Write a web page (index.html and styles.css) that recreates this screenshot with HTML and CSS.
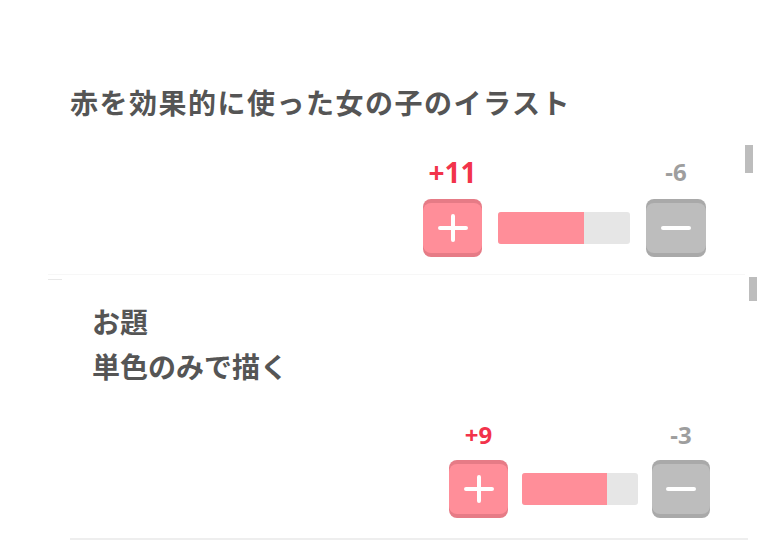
FILE: index.html
```html
<!DOCTYPE html>
<html lang="ja">
<head>
    <meta charset="UTF-8">
    <meta name="viewport" content="width=device-width, initial-scale=1.0">
    <title>お題</title>
    <link rel="stylesheet" href="styles.css">
</head>
<body>
    <div class="card first">
        <span class="thumb"></span>
        <h2 class="title">赤を効果的に使った女の子のイラスト</h2>
        <div class="vote">
            <span class="count plus big">+11</span>
            <span class="count minus">-6</span>
            <button class="btn btn-plus">
                <span class="face">
                    <svg width="30" height="28" viewBox="0 0 30 28"><path d="M15 2v24M2 14h26" stroke="#fff" stroke-width="4" stroke-linecap="round" fill="none"/></svg>
                </span>
            </button>
            <div class="bar"><div class="fill" style="width: 65%"></div></div>
            <button class="btn btn-minus">
                <span class="face">
                    <svg width="30" height="28" viewBox="0 0 30 28"><path d="M2 14h26" stroke="#fff" stroke-width="4" stroke-linecap="round" fill="none"/></svg>
                </span>
            </button>
        </div>
    </div>

    <div class="card second">
        <span class="thumb"></span>
        <div class="inner">
            <p class="theme">お題<br>単色のみで描く</p>
            <div class="vote small">
                <span class="count plus">+9</span>
                <span class="count minus">-3</span>
                <button class="btn btn-plus">
                    <span class="face">
                        <svg width="30" height="28" viewBox="0 0 30 28"><path d="M15 2v24M2 14h26" stroke="#fff" stroke-width="4" stroke-linecap="round" fill="none"/></svg>
                    </span>
                </button>
                <div class="bar"><div class="fill" style="width: 73%"></div></div>
                <button class="btn btn-minus">
                    <span class="face">
                        <svg width="30" height="28" viewBox="0 0 30 28"><path d="M2 14h26" stroke="#fff" stroke-width="4" stroke-linecap="round" fill="none"/></svg>
                    </span>
                </button>
            </div>
        </div>
    </div>
</body>
</html>
```

FILE: styles.css
```css
body {
    margin: 0;
    background: #fff;
    font-family: "Noto Sans CJK JP", "Noto Sans", sans-serif;
    color: #555;
}
.card {
    position: relative;
    margin-left: 48px;
}
.card.first {
    width: 697px;
    padding-top: 82px;
    padding-bottom: 17px;
    border-bottom: 1px solid #f7f7f7;
}
.card.second {
    width: 709px;
    padding-top: 24px;
}
.card.second::before {
    content: "";
    position: absolute;
    left: 0;
    top: 4px;
    width: 14px;
    height: 1px;
    background: #e8e8e8;
}
.thumb {
    position: absolute;
    width: 8px;
    background: #bdbdbd;
}
.first .thumb {
    right: -8px;
    top: 145px;
    height: 28px;
}
.second .thumb {
    right: 0;
    top: 2px;
    height: 24px;
}
.title {
    margin: 0 0 35px 22px;
    font-size: 28px;
    line-height: 40px;
    font-weight: bold;
    letter-spacing: 1.5px;
}
.inner {
    margin: 0 9px 0 22px;
    padding-bottom: 20px;
    border-bottom: 2px solid #eee;
}
.theme {
    margin: 0 0 33px 22px;
    font-size: 28px;
    line-height: 45px;
    font-weight: bold;
}
.vote {
    display: grid;
    grid-template-columns: 59px 132px 60px;
    grid-template-rows: 30px 58px;
    column-gap: 16px;
    row-gap: 12px;
    justify-content: end;
    padding-right: 39px;
}
.vote.small {
    grid-template-columns: 59px 116px 58px;
    grid-template-rows: 26px 58px;
    column-gap: 14px;
    padding-right: 38px;
}
.count {
    font-family: "Noto Sans", sans-serif;
    font-weight: bold;
    font-size: 24px;
    line-height: 30px;
    text-align: center;
    align-self: end;
    grid-row: 1;
}
.vote.small .count {
    line-height: 26px;
}
.count.big {
    font-size: 28px;
}
.count.plus {
    grid-column: 1;
    color: #f2334b;
}
.count.minus {
    grid-column: 3;
    color: #9e9e9e;
}
.btn {
    grid-row: 2;
    height: 58px;
    padding: 0;
    border: none;
    border-radius: 8px;
    cursor: pointer;
}
.btn .face {
    display: flex;
    align-items: center;
    justify-content: center;
    height: 50px;
    border-radius: 8px;
}
.btn-plus {
    grid-column: 1;
    background: #e67b86;
}
.btn-plus .face {
    background: #ff8e99;
}
.btn-minus {
    grid-column: 3;
    background: #a9a9a9;
}
.btn-minus .face {
    background: #bdbdbd;
}
.bar {
    grid-row: 2;
    grid-column: 2;
    align-self: center;
    height: 32px;
    background: #e6e6e6;
    border-radius: 3px;
    overflow: hidden;
}
.fill {
    height: 100%;
    background: #ff8e99;
}
```
